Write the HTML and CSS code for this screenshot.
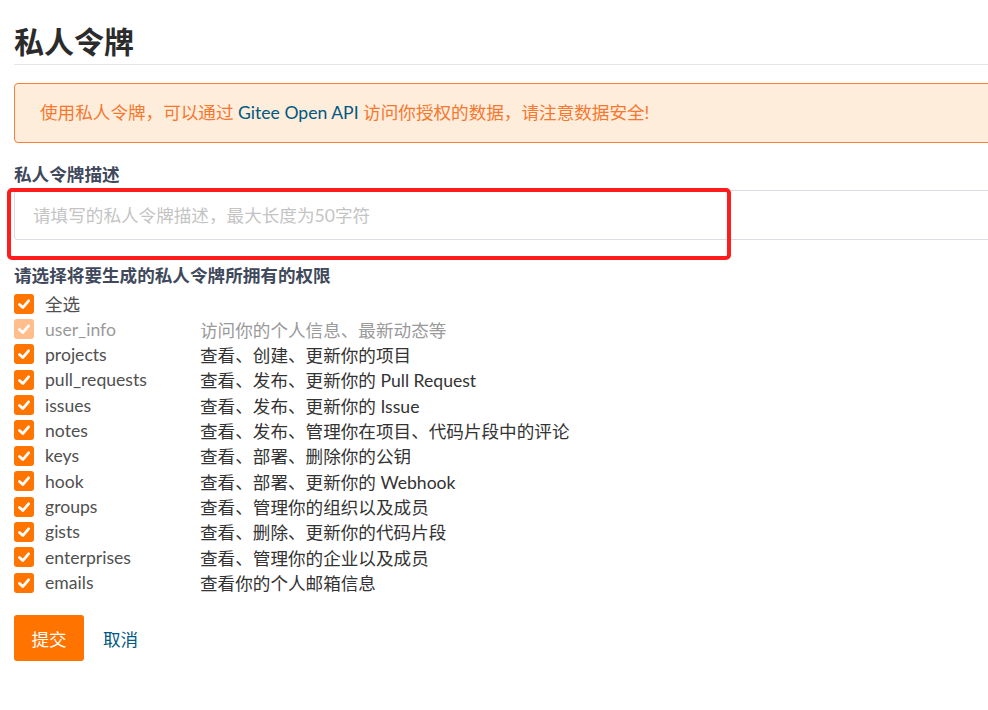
FILE: index.html
```html
<!DOCTYPE html>
<html lang="zh-CN">
<head>
    <meta charset="UTF-8">
    <meta name="viewport" content="width=device-width, initial-scale=1.0">
    <title>私人令牌</title>
    <link rel="stylesheet" href="styles.css">
</head>
<body>
    <div class="container">
        <h1 class="page-title">私人令牌</h1>

        <div class="alert">
            使用私人令牌，可以通过 <a href="#" class="alert-link">Gitee Open API</a> 访问你授权的数据，请注意数据安全!
        </div>

        <form id="tokenForm">
            <div class="form-group">
                <label class="field-label" for="description">私人令牌描述</label>
                <div class="field-wrap">
                    <input type="text" id="description" class="field-input" placeholder="请填写的私人令牌描述，最大长度为50字符">
                    <div class="mark"></div>
                </div>
            </div>

            <div class="form-group">
                <div class="field-label perm-title">请选择将要生成的私人令牌所拥有的权限</div>
                <div class="perm-list" id="permList"></div>
            </div>

            <div class="actions">
                <button type="submit" class="btn">提交</button>
                <a href="#" class="cancel">取消</a>
            </div>
        </form>
    </div>

    <script>
        const perms = [
            ['全选', ''],
            ['user_info', '访问你的个人信息、最新动态等', true],
            ['projects', '查看、创建、更新你的项目'],
            ['pull_requests', '查看、发布、更新你的 Pull Request'],
            ['issues', '查看、发布、更新你的 Issue'],
            ['notes', '查看、发布、管理你在项目、代码片段中的评论'],
            ['keys', '查看、部署、删除你的公钥'],
            ['hook', '查看、部署、更新你的 Webhook'],
            ['groups', '查看、管理你的组织以及成员'],
            ['gists', '查看、删除、更新你的代码片段'],
            ['enterprises', '查看、管理你的企业以及成员'],
            ['emails', '查看你的个人邮箱信息']
        ];

        const check = '<svg viewBox="0 0 20 20" width="20" height="20"><polyline points="5.5,10.5 8.8,13.6 14.6,6.8" fill="none" stroke="#fff" stroke-width="2.8" stroke-linecap="round" stroke-linejoin="round"/></svg>';
        const list = document.getElementById('permList');

        perms.forEach(([name, desc, locked]) => {
            const row = document.createElement('label');
            row.className = 'perm-row' + (locked ? ' locked' : '');
            row.innerHTML =
                '<span class="box">' + check + '</span>' +
                '<span class="perm-name">' + name + '</span>' +
                '<span class="perm-desc">' + desc + '</span>';
            list.appendChild(row);
        });
    </script>
</body>
</html>
```

FILE: styles.css
```css
body {
    margin: 0;
    padding: 0;
    overflow: hidden;
    background: #fff;
    font-family: Lato, "Noto Sans CJK SC", sans-serif;
    font-size: 17.6px;
    color: #333;
}

.container {
    width: 1100px;
    padding-left: 14px;
}

.page-title {
    margin: 20px 0 0;
    padding-bottom: 4px;
    font-size: 30px;
    line-height: 40px;
    font-weight: bold;
    color: #2b2b2b;
    border-bottom: 1px solid #e5e5e5;
    font-family: "Noto Sans CJK SC", sans-serif;
}

.alert {
    margin-top: 18px;
    padding: 17px 25px;
    line-height: 24px;
    background: #ffeddc;
    border: 1px solid #f8803c;
    border-radius: 4px;
    color: #f6772e;
}

.alert-link {
    color: #005980;
    text-decoration: none;
}

.form-group {
    margin-top: 19px;
}

.field-label {
    display: block;
    margin-bottom: 4px;
    line-height: 24px;
    font-weight: bold;
    color: #40485b;
    font-family: "Noto Sans CJK SC", sans-serif;
}

.field-wrap {
    position: relative;
}

.field-input {
    display: block;
    box-sizing: border-box;
    width: 100%;
    height: 50px;
    padding: 0 18px;
    border: 1px solid #dcdde3;
    border-radius: 3px;
    font-family: inherit;
    font-size: 17.6px;
    color: #333;
}

.field-input::placeholder {
    color: #c4c4c4;
}

.field-input:focus {
    outline: none;
}

/* screenshot annotation */
.mark {
    position: absolute;
    left: -7px;
    top: -2px;
    width: 724px;
    height: 72px;
    box-sizing: border-box;
    border: 4px solid #ff1c1c;
    border-radius: 5px;
    pointer-events: none;
}

.form-group + .form-group {
    margin-top: 23px;
}

.perm-title {
    margin-bottom: 4px;
}

.perm-row {
    display: flex;
    align-items: center;
    height: 25.36px;
    cursor: pointer;
}

.box {
    display: flex;
    width: 20px;
    height: 20px;
    border-radius: 3px;
    background: #ff7500;
    flex-shrink: 0;
}

.perm-name {
    width: 155px;
    margin-left: 11px;
    color: #505050;
}

.perm-desc {
    color: #333;
}

.locked .box {
    background: #ffbe8c;
}

.locked .perm-name,
.locked .perm-desc {
    color: #9a9a9a;
}

.actions {
    display: flex;
    align-items: center;
    margin-top: 20px;
}

.btn {
    width: 70px;
    height: 46px;
    padding: 0;
    background: #ff7300;
    border: none;
    border-radius: 3px;
    color: #fff;
    font-family: inherit;
    font-size: 17.6px;
    cursor: pointer;
}

.cancel {
    margin-left: 19px;
    color: #005980;
    text-decoration: none;
}
```
